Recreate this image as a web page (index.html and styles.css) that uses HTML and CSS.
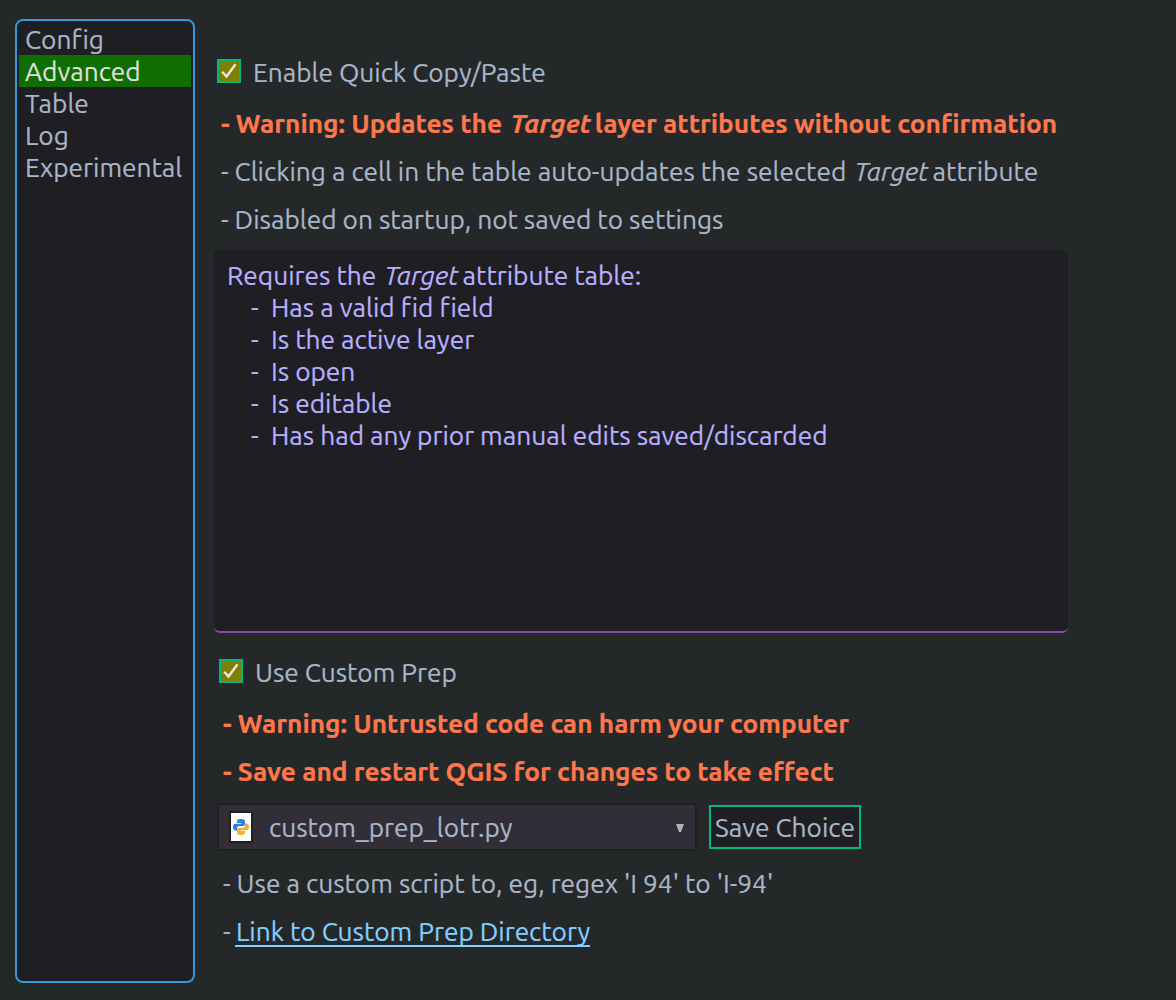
FILE: index.html
```
<!DOCTYPE html>
<html lang="en">
<head>
<meta charset="utf-8">
<title>Settings</title>
<link rel="stylesheet" href="styles.css">
</head>
<body>
<div class="window">
  <nav class="sidebar">
    <div class="item">Config</div>
    <div class="item selected">Advanced</div>
    <div class="item">Table</div>
    <div class="item">Log</div>
    <div class="item">Experimental</div>
  </nav>
  <main class="content">
    <section class="group quick">
      <div class="check-row">
        <svg class="box" viewBox="0 0 24 24"><rect x="1" y="1" width="22" height="22"/><path d="M5.200 12.800 9.500 17.500 18.500 5.200"/></svg>
        <span class="label">Enable Quick Copy/Paste</span>
      </div>
      <p class="line warn">- Warning: Updates the <i>Target</i> layer attributes without confirmation</p>
      <p class="line">- Clicking a cell in the table auto-updates the selected <i>Target</i> attribute</p>
      <p class="line">- Disabled on startup, not saved to settings</p>
    </section>
    <section class="notes">
      <p class="note">Requires the <i>Target</i> attribute table:</p>
      <p class="note bullet"><span class="mark">-</span>Has a valid fid field</p>
      <p class="note bullet"><span class="mark">-</span>Is the active layer</p>
      <p class="note bullet"><span class="mark">-</span>Is open</p>
      <p class="note bullet"><span class="mark">-</span>Is editable</p>
      <p class="note bullet"><span class="mark">-</span>Has had any prior manual edits saved/discarded</p>
    </section>
    <section class="group prep">
      <div class="check-row">
        <svg class="box" viewBox="0 0 24 24"><rect x="1" y="1" width="22" height="22"/><path d="M5.200 12.800 9.500 17.500 18.500 5.200"/></svg>
        <span class="label">Use Custom Prep</span>
      </div>
      <p class="line warn">- Warning: Untrusted code can harm your computer</p>
      <p class="line warn">- Save and restart QGIS for changes to take effect</p>
      <div class="controls">
        <div class="combo">
          <svg class="file" viewBox="0 0 24 32"><rect class="edge" width="24" height="32" rx="1"/><rect class="paper" x="2" y="2" width="20" height="28"/><path class="blue" d="M12 8c-3.500 0-4 1-4 2.500V12h4.500v.8H6.500C4.600 12.800 4 14 4 16s.8 3.500 2.500 3.500H8V17.500c0-1.500 1-2.500 2.500-2.500h3.500c1.300 0 2-.8 2-2V10.500C16 8.800 14.800 8 12 8Z"/><path class="yellow" d="M12 24c3.500 0 4-1 4-2.500V20h-4.500v-.8h6C19.400 19.200 20 18 20 16s-.8-3.500-2.500-3.500H16V14.500c0 1.500-1 2.500-2.500 2.500H10c-1.300 0-2 .8-2 2v2.500C8 23.200 9.200 24 12 24Z"/></svg>
          <span class="label">custom_prep_lotr.py</span>
          <svg class="arrow" viewBox="0 0 8 8"><path d="M0 0H8L5 8H3Z"/></svg>
        </div>
        <button class="save">Save Choice</button>
      </div>
      <p class="line">- Use a custom script to, eg, regex 'I 94' to 'I-94'</p>
      <p class="line link-line"><span class="dash">-</span><a>Link to Custom Prep Directory</a></p>
    </section>
  </main>
</div>
</body>
</html>
```
FILE: styles.css
```
* { box-sizing: border-box; }
body { margin: 0; background: #252829; color: #a8b6c8; font: 26.25px/34px Ubuntu, "Noto Sans", sans-serif; font-variant-ligatures: none; -webkit-text-stroke: 0.2px currentColor; white-space: nowrap; }
p { margin: 0; }
i { margin: 0 -2px 0 2px; }
.window { display: flex; width: 1176px; height: 1000px; padding: 19px 0 17px 15px; overflow: hidden; }
.sidebar { width: 180px; height: 964px; padding: 2px; border: 2px solid #3498db; border-radius: 8px; background: #1f1e23; }
.item { height: 32px; padding-left: 6px; }
.selected { background: #0f6e00; color: #dfdfdf; }
.content { width: 854px; margin-left: 19px; }
.group { display: flex; flex-direction: column; }
.quick { padding: 37px 0 0 3px; }
.check-row { display: flex; align-items: center; gap: 12px; height: 32px; margin-bottom: 19px; }
.label { padding-top: 2px; }
.box { width: 24px; height: 24px; margin-top: -2px; }
.box rect { fill: #808000; stroke: #00b880; stroke-width: 2; }
.box path { fill: none; stroke: #e6e6e6; stroke-width: 2.400; }
.line { height: 32px; margin: 0 0 16px 4px; font-size: 26.27px; }
.line.warn { color: #ff784d; font-weight: 700; font-size: 26.31px; line-height: 32px; }
.notes { height: 383px; margin-top: -1px; padding: 9px 13px; border-bottom: 2px solid #8e44ad; border-radius: 6px; background: #1f1e23; color: #b8b0ff; }
.note { height: 32px; font-size: 26.28px; }
.bullet { display: flex; padding-left: 24px; }
.mark { width: 20px; }
.prep { padding: 23px 0 0 5px; }
.controls { display: flex; align-items: center; gap: 12px; margin: 0 0 16px -2px; height: 48px; }
.combo { display: flex; align-items: center; width: 480px; height: 48px; padding: 0 11px 0 10px; border: 2px solid #202020; background: #312e38; }
.file { width: 24px; height: 32px; margin-right: 16px; }
.edge { fill: #1f1e23; }
.paper { fill: #fcfcfc; }
.blue { fill: #2f80df; }
.yellow { fill: #f2b233; }
.arrow { width: 8px; height: 8px; margin: 1px 0 0 auto; fill: #b0b0b0; }
.save { width: 152px; height: 44px; padding: 2px 0 0 4px; border: 2px solid #00b880; background: #1f1e23; color: inherit; font: inherit; text-align: left; }
.link-line { display: flex; }
.dash { width: 12px; }
.link-line a { height: 32px; padding-left: 1px; border-bottom: 2px solid #80cfff; color: #80cfff; }
```
